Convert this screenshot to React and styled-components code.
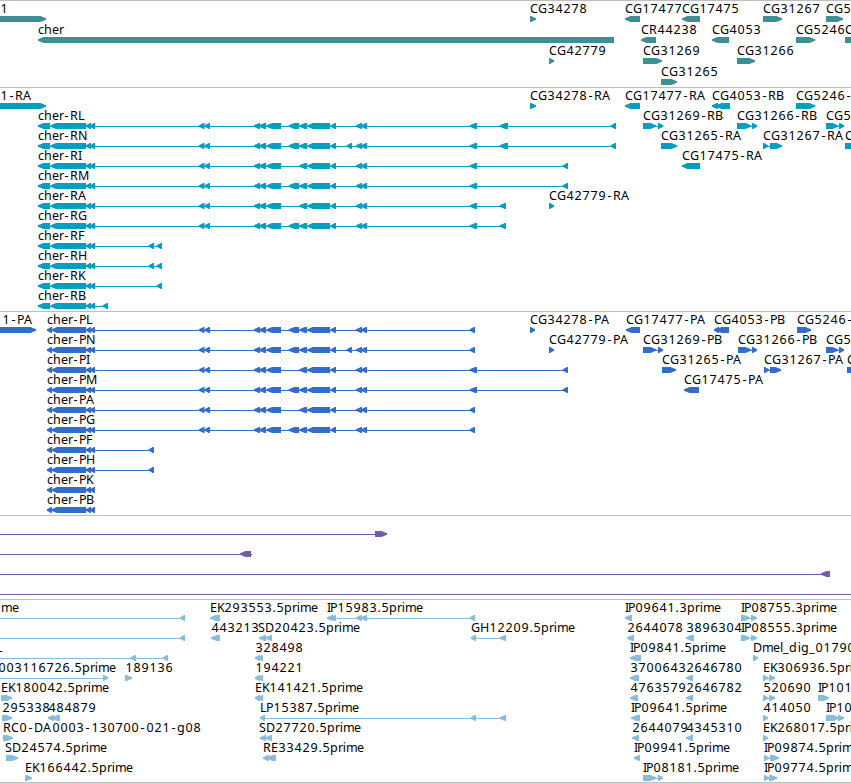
import styled, { createGlobalStyle } from "styled-components";

const WIDTH = 851;

// advance of every character in the label font, in pixels
const ADVANCES = {
  C: 8, G: 9, R: 8, A: 9, P: 7, L: 6, N: 9, I: 3, M: 10, F: 6, H: 9, K: 7,
  B: 7, E: 7, S: 7, D: 9, c: 6, h: 8, e: 7, r: 4, p: 8, i: 4, m: 11, l: 3,
  d: 8, g: 8, _: 6, "-": 7, ".": 4,
};

// side space of the characters that are narrower than their cell
const OFFSETS = { "-": 1.4, i: 0.7, ".": 0.4 };

const isDigit = (char) => char >= "0" && char <= "9";

const charPositions = (text, start) => {
  let x = start;
  return [...text]
    .map((char) => {
      const position = x + (isDigit(char) ? 0.4 : OFFSETS[char] || 0);
      x += isDigit(char) ? 8 : ADVANCES[char] || 7;
      return position;
    })
    .join(" ");
};

const left = (label, x, exons, extra) => ({ label, x, exons, dir: "left", ...extra });
const right = (label, x, exons, extra) => ({ label, x, exons, dir: "right", ...extra });

const SHARED_EXONS = [[86, 91], [90, 95]];
const MIDDLE_EXONS = [
  [199, 204.5], [204.5, 210], [254, 260], [259, 266], [266.5, 281],
  [299.3, 307], [307.3, 330], [330.5, 336], [356, 362], [361, 367],
];
const OPTIONAL_EXON = [288.7, 299];
const SMALL_EXON = [346.7, 352];

const transcript = (name, tail) =>
  left(`cher-${name}`, 38, [[38, 50], [50.5, 86], ...SHARED_EXONS, ...tail]);
const protein = (name, tail) =>
  left(`cher-${name}`, 47, [[47, 52], [51.5, 86], ...SHARED_EXONS, ...tail]);

const geneRows = [
  [
    right("1", 0, [[-10, 46]]),
    right("CG34278", 530, [[530, 536]]),
    left("CG17477", 625, [[625, 640]]),
    left("CG17475", 682, [[682, 700]]),
    right("CG31267", 763, [[763, 782]]),
    right("CG5", 826, [[826, 843]]),
  ],
  [
    left("cher", 38, [[38, 614]]),
    left("CR44238", 641, [[641, 656]]),
    left("CG4053", 712, [[712, 729]]),
    right("CG5246", 796, [[796, 815]]),
    right("C", 845, [[845, 870]]),
  ],
  [
    right("CG42779", 549, [[549, 554]]),
    right("CG31269", 643, [[643, 662]]),
    right("CG31266", 737, [[737, 755]]),
  ],
  [right("CG31265", 661, [[661, 677]])],
];

const transcriptRows = [
  [
    right("1-RA", 0, [[-10, 46]]),
    right("CG34278-RA", 530, [[530, 536]]),
    left("CG17477-RA", 625, [[625, 640]]),
    left("CG4053-RB", 712, [[712, 718], [716, 730]]),
    right("CG5246-", 796, [[796, 815]]),
  ],
  [
    transcript("RL", [...MIDDLE_EXONS, OPTIONAL_EXON, [469.7, 477], [499.7, 508], [610.7, 616]]),
    right("CG31269-RB", 643, [[643, 656], [658, 663]]),
    right("CG31266-RB", 737, [[737, 751], [752, 757]]),
    right("CG5", 826, [[826, 838], [839, 844]]),
  ],
  [
    transcript("RN", [...MIDDLE_EXONS, OPTIONAL_EXON, SMALL_EXON, [469.7, 477], [499.7, 508], [610.7, 616]]),
    right("CG31265-RA", 661, [[661, 677]]),
    right("CG31267-RA", 763, [[763, 768], [770, 782]]),
    right("C", 845, [[845, 870]]),
  ],
  [
    transcript("RI", [...MIDDLE_EXONS, [469.7, 477], [562.7, 568]]),
    left("CG17475-RA", 682, [[682, 700]]),
  ],
  [transcript("RM", [...MIDDLE_EXONS, OPTIONAL_EXON, [469.7, 477], [562.7, 568]])],
  [
    transcript("RA", [...MIDDLE_EXONS, [469.7, 477], [499.7, 506]]),
    right("CG42779-RA", 549, [[549, 554]]),
  ],
  [transcript("RG", [...MIDDLE_EXONS, OPTIONAL_EXON, [469.7, 477], [499.7, 506]])],
  [transcript("RF", [[148.7, 154], [156.7, 162]])],
  [transcript("RH", [[148.7, 154], [156.7, 162]])],
  [transcript("RK", [[156.7, 162]])],
  [transcript("RB", [[102.7, 108]])],
];

const proteinRows = [
  [
    right("1-PA", 2, [[-10, 36]]),
    protein("PL", [...MIDDLE_EXONS, OPTIONAL_EXON, [469.7, 475]]),
    right("CG34278-PA", 530, [[530, 535]]),
    left("CG17477-PA", 626, [[626, 640]]),
    left("CG4053-PB", 714, [[714, 719], [716, 729]]),
    right("CG5246-", 797, [[797, 811]]),
  ],
  [
    protein("PN", [...MIDDLE_EXONS, OPTIONAL_EXON, SMALL_EXON, [469.7, 475]]),
    right("CG42779-PA", 549, [[549, 554]]),
    right("CG31269-PB", 643, [[643, 656], [658, 663]]),
    right("CG31266-PB", 738, [[738, 751], [752, 757]]),
    right("CG5", 826, [[826, 838], [839, 844]]),
  ],
  [
    protein("PI", [...MIDDLE_EXONS, [469.7, 477], [562.7, 568]]),
    right("CG31265-PA", 662, [[662, 676]]),
    right("CG31267-PA", 764, [[764, 769], [770, 781]]),
    right("C", 847, [[847, 870]]),
  ],
  [
    protein("PM", [...MIDDLE_EXONS, OPTIONAL_EXON, [469.7, 477], [562.7, 568]]),
    left("CG17475-PA", 684, [[684, 699]]),
  ],
  [protein("PA", [...MIDDLE_EXONS, [469.7, 475]])],
  [protein("PG", [...MIDDLE_EXONS, OPTIONAL_EXON, [469.7, 475]])],
  [protein("PF", [[148.7, 154]])],
  [protein("PH", [[148.7, 154]])],
  [protein("PK", [])],
  [protein("PB", [])],
];

const insertionRows = [
  [right("", 0, [[375, 387]], { from: 0 })],
  [left("", 0, [[240, 251]], { from: 0, to: 252 })],
  [left("", 0, [[821, 830]], { from: 0 })],
  [left("", 0, [], { from: 0, to: WIDTH })],
];

const estRows = [
  [
    left("me", 1, [[180, 185]], { from: 0 }),
    left("EK293553.5prime", 210, [[210, 220]]),
    left("IP15983.5prime", 327, [[327, 333], [331, 336], [356, 362], [361, 367], [469.7, 475]]),
    left("IP09641.3prime", 625, [[625, 632]]),
    right("IP08755.3prime", 741, [[741, 750], [751, 757]]),
  ],
  [
    left("", 0, [[180, 185]], { from: 0 }),
    left("443213", 211, [[211, 220]]),
    left("SD20423.5prime", 258, [[259, 266], [265.5, 272]]),
    left("GH12209.5prime", 471, [[470.7, 476], [499.7, 506]]),
    left("2644078", 627, [[627, 634]]),
    left("3896304", 686, [[686, 694]]),
    right("IP08555.3prime", 741, [[741, 750], [751, 757]]),
  ],
  [
    left("L", -4, [[130.7, 136], [162.7, 168]], { from: 0 }),
    left("328498", 255, [[255, 260], [258.5, 263]]),
    left("IP09841.5prime", 630, [[630, 641]]),
    right("Dmel_dig_01790", 753, [[753, 758]]),
  ],
  [
    right("003116726.5prime", -2, [[103, 108]], { from: 0 }),
    right("189136", 125, [[125, 132]]),
    left("194221", 255, [[255, 260], [258.5, 263]]),
    left("3700643", 630, [[630, 639]]),
    left("2646780", 686, [[686, 693]]),
    right("EK306936.5prime", 763, [[763, 768], [769, 775]]),
  ],
  [
    right("EK180042.5prime", 1, [[1, 12]]),
    left("EK141421.5prime", 255, [[255, 260], [258.5, 263]]),
    left("4763579", 630, [[630, 638]]),
    left("2646782", 686, [[686, 693]]),
    right("520690", 763, [[763, 768], [769, 775]]),
    right("IP101", 818, [[818, 829]]),
  ],
  [
    right("295338", 2, [[2, 12]]),
    left("484879", 48, [[48, 54], [52, 60]]),
    left("LP15387.5prime", 260, [[260, 265], [470.7, 476], [499.7, 506]]),
    left("IP09641.5prime", 631, [[631, 640]]),
    right("414050", 763, [[763, 768]]),
    right("IP10", 826, [[826, 839], [838, 844]]),
  ],
  [
    right("RC0-DA0003-130700-021-g08", 3, [[3, 13]]),
    left("SD27720.5prime", 259, [[260, 266], [265.5, 272]]),
    left("2644079", 632, [[632, 639]]),
    left("4345310", 686, [[686, 693]]),
    right("EK268017.5prime", 763, [[763, 768]]),
  ],
  [
    right("SD24574.5prime", 5, [[6, 18]]),
    left("RE33429.5prime", 263, [[263, 269], [267, 276]]),
    left("IP09941.5prime", 634, [[634, 640]]),
    right("IP09874.5prime", 764, [[764, 769], [770, 779]]),
  ],
  [
    right("EK166442.5prime", 25, [[25, 32]]),
    right("IP08181.5prime", 643, [[643, 656], [658, 663]]),
    right("IP09774.5prime", 764, [[764, 769], [769, 777]]),
  ],
];

const tracks = [
  { name: "genes", color: "#3f8e93", height: 87, rowHeight: 21, rows: geneRows },
  { name: "transcripts", color: "#009ebf", height: 224, rowHeight: 20, rows: transcriptRows },
  { name: "proteins", color: "#326dcb", height: 204, rowHeight: 20, rows: proteinRows },
  { name: "insertions", color: "#755aa7", height: 84, rowHeight: 20, rows: insertionRows },
  { name: "ests", color: "#88bcdd", height: 183, rowHeight: 20, rows: estRows },
];

function Exon({ start, end, dir }) {
  const head = Math.min(5.5, end - start - 1);
  const points =
    dir === "left"
      ? `${start},16.2 ${start + head},14 ${end},14 ${end},20 ${start + head},20 ${start},17.8`
      : `${start},14 ${end - head},14 ${end},16.2 ${end},17.8 ${end - head},20 ${start},20`;
  return <polygon points={points} />;
}

function Feature({ label, x, exons, dir, from, to }) {
  const lineStart = from ?? Math.min(...exons.map((exon) => exon[0]));
  const lineEnd = to ?? Math.max(...exons.map((exon) => exon[1]));
  const hasLine = exons.length > 1 || from !== undefined;

  return (
    <g>
      {hasLine && <rect x={lineStart} y="17" width={lineEnd - lineStart} height="1" />}
      {exons.map(([start, end]) => (
        <Exon key={start} start={start} end={end} dir={dir} />
      ))}
      {label && (
        <Label x={charPositions(label, x)} y="11">
          {label}
        </Label>
      )}
    </g>
  );
}

export default function App() {
  return (
    <>
      <GlobalStyle />
      <Browser>
        {tracks.map((track) => (
          <Track key={track.name} $height={track.height}>
            {track.rows.map((row, index) => (
              <Row key={index} $height={track.rowHeight} $color={track.color}>
                {row.map((feature, i) => (
                  <Feature key={i} {...feature} />
                ))}
              </Row>
            ))}
          </Track>
        ))}
      </Browser>
    </>
  );
}

const GlobalStyle = createGlobalStyle`
  body {
    margin: 0;
    background: #fff;
  }
`;

const Browser = styled.main`
  display: flex;
  flex-direction: column;
  box-sizing: border-box;
  width: ${WIDTH}px;
  height: 783px;
  overflow: hidden;
  border-bottom: 1px solid #bebebe;
`;

const Track = styled.section`
  display: flex;
  flex-direction: column;
  flex-shrink: 0;
  box-sizing: border-box;
  height: ${(props) => props.$height}px;
  padding-top: 1px;
  border-top: 1px solid #bebebe;
  overflow: hidden;
`;

const Row = styled.svg`
  display: block;
  flex-shrink: 0;
  width: 100%;
  height: ${(props) => props.$height}px;
  overflow: visible;
  fill: ${(props) => props.$color};
`;

const Label = styled.text`
  fill: #000;
  font-family: "Noto Sans", "Open Sans", sans-serif;
  font-size: 12.5px;
`;
